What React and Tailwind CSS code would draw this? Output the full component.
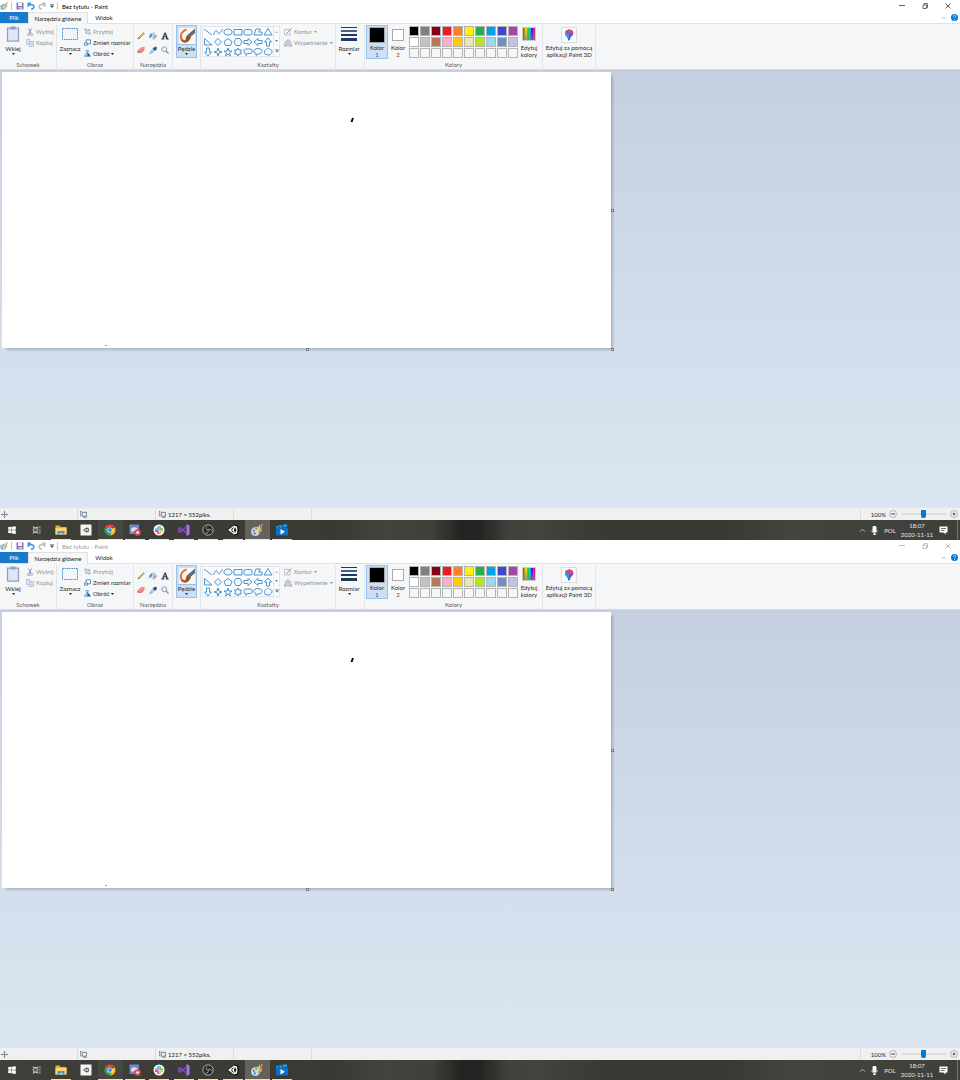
import React from "react";

const FONT = "font-['Lato','Open_Sans','Noto_Sans',sans-serif]";

function Svg({ className, box = "0 0 16 16", children }) {
  return (
    <svg viewBox={box} className={`block shrink-0 ${className}`} fill="none" aria-hidden="true">
      {children}
    </svg>
  );
}

/* ---------- icons ---------- */

function PaintIcon({ className = "size-2" }) {
  return (
    <Svg className={className}>
      <path d="M0 10c0-4 4-6 8-6 3 0 6 1 6 4s-3 2-3 4-2 4-5 4-6-2-6-6z" fill="#c4e0ee" stroke="#86b3cc" />
      <circle cx="3.6" cy="9" r="1.5" fill="#d94a38" />
      <circle cx="7" cy="6.4" r="1.4" fill="#4fa64a" />
      <circle cx="5" cy="12.500" r="1.5" fill="#2f7fcf" />
      <path d="M15 0L10 12" stroke="#e8912d" strokeWidth="1.900" />
      <path d="M11.500 1L9 12" stroke="#f3c65a" strokeWidth="1.400" />
    </Svg>
  );
}

function SaveIcon() {
  return (
    <Svg className="size-2">
      <path d="M1 1h14v14H1z" fill="#8474bc" />
      <path d="M4 1h8v7H4z" fill="#f2f0fa" />
      <path d="M4 10h8v5H4z" fill="#d8d4ec" />
      <path d="M5 11h2v3H5z" fill="#5a4b99" />
    </Svg>
  );
}

function UndoIcon({ flip, className }) {
  return (
    <Svg className={className}>
      <g transform={flip ? "translate(16 0) scale(-1 1)" : undefined}>
        <path d="M4 5.500h5c7 0 6 8-1 9" stroke="currentColor" strokeWidth="3" />
        <path d="M1 1l8 0-6 9H1z" fill="currentColor" />
      </g>
    </Svg>
  );
}

function Caret({ className = "" }) {
  return (
    <Svg className={`h-[2px] w-[3px] ${className}`} box="0 0 6 4">
      <path d="M0 0h6L3 4z" fill="currentColor" />
    </Svg>
  );
}

function PasteIcon() {
  return (
    <Svg className="h-4 w-3.5" box="0 0 28 32">
      <path d="M3 4h22v26H3z" fill="#dbe5f3" stroke="#8ea1c2" strokeWidth="2.500" />
      <path d="M9 1h10v6H9z" fill="#8ea1c2" />
      <path d="M6 9h16v18H6z" fill="#e0e8f5" />
    </Svg>
  );
}

function CutIcon() {
  return (
    <Svg className="size-2">
      <path d="M5 1l5 10M11 1L6 11" stroke="#8e9bb3" strokeWidth="2" />
      <circle cx="5" cy="13" r="2.2" stroke="#8e9bb3" strokeWidth="1.8" />
      <circle cx="11" cy="13" r="2.2" stroke="#8e9bb3" strokeWidth="1.8" />
    </Svg>
  );
}

function CopyIcon() {
  return (
    <Svg className="size-2">
      <path d="M1 1h7v10H1z" fill="#dfe7f3" stroke="#a3b4cf" strokeWidth="1.4" />
      <path d="M6 5h9v10H6z" fill="#dfe7f3" stroke="#a3b4cf" strokeWidth="1.4" />
      <path d="M8 8h5M8 11h5" stroke="#a3b4cf" />
    </Svg>
  );
}

function SelectIcon() {
  return (
    <Svg className="h-4 w-4" box="0 0 32 32">
      <path d="M1 5h30v22H1z" fill="#f0f5fb" stroke="#4a8fc8" strokeWidth="2" strokeDasharray="3 1.500" />
    </Svg>
  );
}

function CropIcon() {
  return (
    <Svg className="size-[7px]">
      <path d="M4 0v12h12M0 4h12v12M4 12L14 2" stroke="#8f9cb6" strokeWidth="1.6" />
    </Svg>
  );
}

function ResizeIcon() {
  return (
    <Svg className="size-[7px]">
      <path d="M5 2h10v9H5z" fill="#fff" stroke="#3d7fb4" strokeWidth="2" />
      <path d="M1 9h7v5H1z" fill="#fff" stroke="#3d7fb4" strokeWidth="2" />
    </Svg>
  );
}

function RotateIcon() {
  return (
    <Svg className="size-[7px]">
      <path d="M8 3v12H0z" fill="#9cc7e6" stroke="#3d8ec4" />
      <path d="M8 15V4l8 11z" fill="#1c5f9c" />
      <path d="M3 3c2-3 6-3 9 0" stroke="#2f6fb0" strokeWidth="1.6" />
    </Svg>
  );
}

const TOOLS = [
  {
    name: "Ołówek",
    art: (
      <>
        <path d="M2 14l2-4L13 1l2 2-9 9z" fill="#e9b54c" stroke="#a87935" />
        <path d="M2 14l1-3 2 2z" fill="#333" />
      </>
    ),
  },
  {
    name: "Wypełnianie kolorem",
    art: (
      <>
        <path d="M9 1l7 7-6 7-6-6z" fill="#dbe7f2" stroke="#7d9ab8" strokeWidth="1.3" />
        <path d="M8 5l6 3-4 6z" fill="#d9886b" />
        <path d="M7 2C2 3-1 8 1 13l4-4z" fill="#3f97d6" />
      </>
    ),
  },
  {
    name: "Tekst",
    art: (
      <path
        d="M7 1h2.500L14 13h1.500v2H9.500v-2h1l-.7-2.500H6L5.200 13h1.200v2H.8v-2H2zM8 4.600L6.500 8.600h2.800z"
        fill="#26405f"
      />
    ),
  },
  {
    name: "Gumka",
    art: (
      <>
        <path d="M1 10l7-7h7l-6 8H1z" fill="#f0938f" stroke="#d0716e" />
        <path d="M1 10h8l6-6v4l-6 6H1z" fill="#e07a77" />
      </>
    ),
  },
  {
    name: "Selektor kolorów",
    art: (
      <>
        <path d="M1 15l2-4 6-6 3 3-6 6z" fill="#a9d0ef" stroke="#5f90bd" />
        <path d="M7 4l3-1 3-2 3 2-1 4-3 3z" fill="#28568e" />
      </>
    ),
  },
  {
    name: "Lupa",
    art: (
      <>
        <circle cx="6.500" cy="6.500" r="5" fill="#e8f2fb" stroke="#8396ae" strokeWidth="1.8" />
        <path d="M10 10l5 5" stroke="#a88960" strokeWidth="2.6" />
      </>
    ),
  },
];

function BrushIcon() {
  return (
    <Svg className="size-4" box="0 0 32 32">
      <rect width="32" height="32" fill="#faf7f3" />
      <path d="M15 3C7 6 2 13 4 20c2 7 9 8 14 4" stroke="#e8703c" strokeWidth="4.500" />
      <path d="M5 23c3 6 10 6 14 1" stroke="#cf4a20" strokeWidth="3.500" />
      <path d="M32 1v9l-9 8-5-5z" fill="#5d6b7d" />
      <path d="M18 13l6 5c-1 5-5 9-12 10 2-3 0-10 6-15z" fill="#8a5634" />
    </Svg>
  );
}

const SHAPES = [
  ["Linia", "M2 4l16 12"],
  ["Krzywa", "M1 16c5-14 7-8 9-4s4 1 9-8"],
  ["Owal", "M10 4c11 0 11 12 0 12S-1 4 10 4z"],
  ["Prostokąt", "M2 5h16v11H2z"],
  ["Prostokąt zaokrąglony", "M5 5h10q3 0 3 3v5q0 3-3 3H5q-3 0-3-3V8q0-3 3-3z"],
  ["Wielokąt", "M6 4h9l-4 6h7v6H2z"],
  ["Trójkąt", "M10 3l8 13H2z"],
  ["Trójkąt prostokątny", "M3 3l15 13H3z"],
  ["Romb", "M10 3l7 7-7 7-7-7z"],
  ["Pięciokąt", "M10 3l8 6-3 8H5L2 9z"],
  ["Sześciokąt", "M6 3h8l4 7-4 7H6l-4-7z"],
  ["Strzałka w prawo", "M2 7h8V3l8 7-8 7v-4H2z"],
  ["Strzałka w lewo", "M18 7h-8V3l-8 7 8 7v-4h8z"],
  ["Strzałka w górę", "M7 18v-8H3l7-8 7 8h-4v8z"],
  ["Strzałka w dół", "M7 2v8H3l7 8 7-8h-4V2z"],
  ["Gwiazda 4-ramienna", "M10 2l2 6 6 2-6 2-2 6-2-6-6-2 6-2z"],
  ["Gwiazda 5-ramienna", "M10 2l2 6h6l-5 4 2 6-5-4-5 4 2-6-5-4h6z"],
  ["Gwiazda 6-ramienna", "M10 2l2 4h5l-2 4 2 4h-5l-2 4-2-4H3l2-4-2-4h5z"],
  ["Objaśnienie prostokątne", "M5 4h10q3 0 3 3v3q0 3-3 3H9l-3 4v-4H5q-3 0-3-3V7q0-3 3-3z"],
  ["Objaśnienie owalne", "M10 3c11 0 11 11 0 11l-4 3v-4C-2 11 1 3 10 3z"],
  ["Chmurka", "M6 5c3-4 8-2 8 0 5 0 5 6 2 8-1 4-6 4-8 2-5 1-7-3-4-5-2-2 0-5 2-5z"],
];

const COLORS = [
  ["Czarny", "bg-[#000000]"], ["Szary 50%", "bg-[#7f7f7f]"], ["Ciemnoczerwony", "bg-[#880015]"],
  ["Czerwony", "bg-[#ed1c24]"], ["Pomarańczowy", "bg-[#ff7f27]"], ["Żółty", "bg-[#fff200]"],
  ["Zielony", "bg-[#22b14c]"], ["Turkusowy", "bg-[#00a2e8]"], ["Indygo", "bg-[#3f48cc]"],
  ["Purpurowy", "bg-[#a349a4]"], ["Biały", "bg-[#ffffff]"], ["Szary 25%", "bg-[#c3c3c3]"],
  ["Brązowy", "bg-[#b97a57]"], ["Różany", "bg-[#ffaec9]"], ["Złoty", "bg-[#ffc90e]"],
  ["Jasnożółty", "bg-[#efe4b0]"], ["Limonkowy", "bg-[#b5e61d]"], ["Jasnoturkusowy", "bg-[#99d9ea]"],
  ["Niebieskoszary", "bg-[#7092be]"], ["Lawendowy", "bg-[#c8bfe7]"],
  ["Własny 1", "bg-[#f5f6f7]"], ["Własny 2", "bg-[#f5f6f7]"], ["Własny 3", "bg-[#f5f6f7]"],
  ["Własny 4", "bg-[#f5f6f7]"], ["Własny 5", "bg-[#f5f6f7]"], ["Własny 6", "bg-[#f5f6f7]"],
  ["Własny 7", "bg-[#f5f6f7]"], ["Własny 8", "bg-[#f5f6f7]"], ["Własny 9", "bg-[#f5f6f7]"],
  ["Własny 10", "bg-[#f5f6f7]"],
];

/* ---------- window chrome ---------- */

function TitleBar({ active }) {
  return (
    <header className="flex h-3 items-center bg-white">
      <PaintIcon />
      <span className="ml-[3px] h-2 w-px bg-[#c4c4c4]" />
      <button aria-label="Zapisz" className="ml-1"><SaveIcon /></button>
      <button aria-label="Cofnij" className="ml-[3px] text-[#3a96dd]"><UndoIcon className="size-2" /></button>
      <button aria-label="Ponów" className="ml-[3px] text-[#b3c0cd]"><UndoIcon flip className="size-2" /></button>
      <button aria-label="Dostosuj pasek" className="ml-1 text-[#444]">
        <Svg className="h-1 w-1" box="0 0 8 8"><path d="M0 1h8" stroke="#444" /><path d="M0 3h8L4 8z" fill="#444" /></Svg>
      </button>
      <span className="ml-[3px] h-2 w-px bg-[#c4c4c4]" />
      <h1 className={`ml-1 ${active ? "text-black" : "text-[#999]"}`}>Bez tytułu - Paint</h1>
      <div className={`ml-auto flex items-center ${active ? "text-[#333]" : "text-[#aaa]"}`}>
        <button aria-label="Minimalizuj" className="flex h-3 w-[23px] items-center justify-center">
          <Svg className="h-1.5 w-1.5" box="0 0 6 6"><path d="M0 2.500h6" stroke="currentColor" strokeWidth=".8" /></Svg>
        </button>
        <button aria-label="Przywróć" className="flex h-3 w-[23px] items-center justify-center">
          <Svg className="h-1.5 w-1.5" box="0 0 12 12"><path d="M2 4h7v7H2zM4 4V1h7v8H9" stroke="currentColor" strokeWidth="1.4" /></Svg>
        </button>
        <button aria-label="Zamknij" className="flex h-3 w-[23px] items-center justify-center">
          <Svg className="h-1.5 w-1.5" box="0 0 12 12"><path d="M1 1l10 10M11 1L1 11" stroke="currentColor" strokeWidth="1.6" /></Svg>
        </button>
        <span className="w-px" />
      </div>
    </header>
  );
}

function Tabs() {
  return (
    <nav className="flex h-3 border-b border-[#e0e1e3] bg-white text-[#222]">
      <button className="h-[11px] w-7 bg-[#1979ca] text-white">Plik</button>
      <button className="-mb-px h-3 w-15 border-x border-t border-[#e0e1e3] bg-[#f5f6f7]">Narzędzia główne</button>
      <button className="h-[11px] w-8">Widok</button>
      <div className="ml-auto flex items-center gap-[5px] pr-[2px]">
        <button aria-label="Zwiń wstążkę">
          <Svg className="h-1 w-[5px]" box="0 0 10 8"><path d="M1 6l4-4 4 4" stroke="#aaa" strokeWidth="1.6" /></Svg>
        </button>
        <button aria-label="Pomoc" className="flex size-[7px] items-center justify-center rounded-full bg-[#0078d7]">
          <Svg className="size-[7px]">
            <path d="M5.500 6c0-4 5.500-4 5.500-.5C11 8 8 7.500 8 10M8 11.500v2" stroke="#fff" strokeWidth="1.6" />
          </Svg>
        </button>
      </div>
    </nav>
  );
}

function Group({ label, className, children }) {
  return (
    <section className={`flex shrink-0 flex-col border-r border-[#e2e4e7] ${className}`}>
      <div className="flex h-9 items-start">{children}</div>
      {label && <h2 className="text-center text-[#5a5a5a]">{label}</h2>}
    </section>
  );
}

function SmallButton({ icon, caret, disabled, children }) {
  return (
    <button disabled={disabled} className={`flex h-[11px] items-center gap-[2px] whitespace-nowrap ${disabled ? "text-[#929292]" : ""}`}>
      {icon}
      {children}
      {caret && <Caret />}
    </button>
  );
}

function BigButton({ icon, caret, className = "", children }) {
  return (
    <button className={`flex shrink-0 flex-col items-center pt-px ${className}`}>
      <span className="flex h-[19px] items-start justify-center">{icon}</span>
      <span className="whitespace-nowrap">{children}</span>
      {caret && <Caret className="mt-px" />}
    </button>
  );
}

function Ribbon() {
  return (
    <div className="flex h-[46px] overflow-hidden border-b border-[#d3d9e2] bg-[#f5f6f7] pt-px text-[#2a2a2a]">
      <Group label="Schowek" className="w-[57px]">
        <BigButton icon={<PasteIcon />} caret className="w-[26px]">Wklej</BigButton>
        <div className="pt-px">
          <SmallButton icon={<CutIcon />} disabled>Wytnij</SmallButton>
          <SmallButton icon={<CopyIcon />} disabled>Kopiuj</SmallButton>
        </div>
      </Group>

      <Group label="Obraz" className="w-[77px]">
        <BigButton icon={<SelectIcon />} caret className="w-[26px]">Zaznacz</BigButton>
        <div className="pt-px pl-px">
          <SmallButton icon={<CropIcon />} disabled>Przytnij</SmallButton>
          <SmallButton icon={<ResizeIcon />}>Zmień rozmiar</SmallButton>
          <SmallButton icon={<RotateIcon />} caret>Obróć</SmallButton>
        </div>
      </Group>

      <Group label="Narzędzia" className="w-[39px]">
        <div className="grid grid-cols-3 gap-x-1 gap-y-[6px] pt-[7px] pl-[3px]">
          {TOOLS.map((t) => (
            <button key={t.name} aria-label={t.name}><Svg className="size-2">{t.art}</Svg></button>
          ))}
        </div>
      </Group>

      <Group className="w-7">
        <button className="ml-[3px] flex h-[33px] w-[21px] flex-col items-center border border-[#98c2ec] bg-[#c9e0f7] pt-[2px]">
          <BrushIcon />
          <span className="w-full border-t border-[#98c2ec]">Pędzle</span>
          <Caret className="mt-px" />
        </button>
      </Group>

      <Group label="Kształty" className="w-[135px]">
        <div className="mt-px ml-px flex h-[31px] border border-[#e2e5e9] bg-[#fbfcfd]">
          <div className="grid grid-cols-7 content-start">
            {SHAPES.map(([name, d]) => (
              <button key={name} aria-label={name}>
                <Svg className="size-[10px]" box="0 0 20 20">
                  <path d={d} stroke="#3b8ac4" strokeWidth="1.800" fill="#f3f9fe" />
                </Svg>
              </button>
            ))}
          </div>
          <div className="flex w-[6px] flex-col items-center justify-around border-l border-[#e2e5e9] text-[#777]">
            <button aria-label="Przewiń w górę" className="text-[#bbb]"><Caret className="rotate-180" /></button>
            <button aria-label="Przewiń w dół"><Caret /></button>
            <button aria-label="Więcej kształtów">
              <Svg className="h-1 w-1" box="0 0 8 8"><path d="M0 1h8" stroke="#666" /><path d="M0 3h8L4 7z" fill="#666" /></Svg>
            </button>
          </div>
        </div>
        <div className="pt-px pl-1">
          <SmallButton
            disabled
            caret
            icon={<Svg className="size-2"><path d="M1 3h11v11H1z" stroke="#a9b4c6" strokeWidth="1.500" /><path d="M4 12L15 1" stroke="#8f9db5" strokeWidth="2" /></Svg>}
          >
            Kontur
          </SmallButton>
          <SmallButton
            disabled
            caret
            icon={<Svg className="size-2"><path d="M8 1l6 6-6 6-6-6z" fill="#c4cedd" stroke="#8f9db5" strokeWidth="1.500" /><path d="M0 15V9l8 6zM8 15h8V9z" fill="#9facc2" /></Svg>}
          >
            Wypełnienie
          </SmallButton>
        </div>
      </Group>

      <Group className="w-[29px]">
        <BigButton
          caret
          className="w-[26px]"
          icon={<Svg className="h-4 w-4" box="0 0 16 16"><path d="M0 1.500h16" stroke="#1e3a63" /><path d="M0 5h16" stroke="#1e3a63" strokeWidth="1.600" /><path d="M0 9h16" stroke="#1e3a63" strokeWidth="2" /><path d="M0 13.500h16" stroke="#1e3a63" strokeWidth="3" /></Svg>}
        >
          Rozmiar
        </BigButton>
      </Group>

      <Group label="Kolory" className="w-[178px]">
        <button className="ml-px flex h-[34px] w-[22px] flex-col items-center border border-[#98c2ec] bg-[#c9e0f7] pt-px">
          <span className="size-4 border border-[#a8a8a8] bg-black" />
          <span className="mt-px">Kolor</span>
          <span className="text-[#555]">1</span>
        </button>
        <button className="flex h-[34px] w-5 flex-col items-center pt-1">
          <span className="size-3 border border-[#a8a8a8] bg-white" />
          <span className="mt-[3px]">Kolor</span>
          <span className="text-[#555]">2</span>
        </button>
        <div className="ml-px grid grid-cols-10 gap-px pt-px">
          {COLORS.map(([name, bg]) => (
            <button key={name} aria-label={name} className={`size-[10px] border border-[#b4b4b4] ${bg}`} />
          ))}
        </div>
        <button className="flex w-[22px] flex-col items-center pt-[2px]">
          <span className="mb-[3px] size-[14px] border border-[#ccc] bg-[linear-gradient(to_bottom,rgba(128,128,128,0),rgba(128,128,128,.7)),linear-gradient(to_right,#f00,#ff0_25%,#0d0_42%,#0df_58%,#00f_75%,#f0f_88%,#f02)]" />
          <span>Edytuj</span>
          <span>kolory</span>
        </button>
      </Group>

      <Group className="w-[53px]">
        <button className="flex w-full flex-col items-center pt-[2px]">
          <span className="mb-px border border-[#ddd] bg-[#fafafa] p-px">
            <Svg className="size-3" box="0 0 24 24">
              <path d="M12 1C5 1 2 7 5 12l7 3z" fill="#23b4e8" />
              <path d="M12 1c8 0 11 6 7 12l-7 2L5 5z" fill="#7b4bd6" />
              <path d="M12 1c5 0 8 3 8 7l-8 2L6 4z" fill="#ee3e6d" />
              <path d="M5 12h14c-2 4-5 5-5 9 0 3-4 3-4 0 0-4-3-5-5-9z" fill="#3868d8" />
              <path d="M5 7l7 3v9C9 15 3 14 5 7z" fill="#1fa0e0" />
            </Svg>
          </span>
          <span className="whitespace-nowrap">Edytuj za pomocą</span>
          <span className="whitespace-nowrap">aplikacji Paint 3D</span>
        </button>
      </Group>
    </div>
  );
}

function Workspace() {
  const handle = "absolute size-[3px] border border-[#777] bg-white";
  return (
    <main className="flex-1 bg-linear-to-b from-[#c5cfe0] to-[#dce6f2] pt-[2px] pl-[2px]">
      <div className="relative w-[609px] bg-white shadow-[3px_3px_2px_-1px_rgba(70,95,135,0.3)]">
        <svg viewBox="0 0 609 276" className="block w-full" role="img" aria-label="Obszar rysowania">
          <path d="M351 46l-1.500 4" stroke="#000" strokeWidth="2" />
          <path d="M103 273.500h2" stroke="#888" strokeWidth=".8" />
        </svg>
        <span className={`${handle} top-1/2 left-full -translate-y-px`} />
        <span className={`${handle} top-full left-1/2 -translate-x-px`} />
        <span className={`${handle} top-full left-full`} />
      </div>
    </main>
  );
}

function SizeIcon() {
  return (
    <Svg className="size-[7px]">
      <path d="M5 3h10v9H5z" stroke="#4a617f" strokeWidth="1.800" />
      <path d="M1 1v11M0 1h3M8 15h8" stroke="#4a617f" strokeWidth="1.800" strokeDasharray="3 1" />
    </Svg>
  );
}

function ZoomButton({ label, plus }) {
  return (
    <button aria-label={label}>
      <Svg className="size-2">
        <circle cx="8" cy="8" r="6.800" fill="#fafafa" stroke="#888" strokeWidth="1.300" />
        <path d={plus ? "M5 8h6M8 5v6" : "M4 8h8"} stroke="#555" strokeWidth="2.400" />
      </Svg>
    </button>
  );
}

function StatusBar() {
  const cell = "flex items-center border-r border-[#dcdcdc]";
  return (
    <footer className="flex h-3 bg-[#f0f0f0] text-[#222]">
      <div className={`${cell} w-[78px] pl-px`}>
        <Svg className="size-[7px]"><path d="M8 1v14M1 8h14M6 3l2-2 2 2M6 13l2 2 2-2M3 6L1 8l2 2M13 6l2 2-2 2" stroke="#4a617f" strokeWidth="1.500" /></Svg>
      </div>
      <div className={`${cell} w-[78px] pl-[2px]`}><SizeIcon /></div>
      <div className={`${cell} w-[78px] gap-[2px] pl-[3px] whitespace-nowrap`}><SizeIcon />1217 × 552piks.</div>
      <div className={`${cell} w-[78px]`} />
      <div className="ml-auto flex items-center border-l border-[#dcdcdc] pr-[2px]">
        <span className="w-7 pr-[3px] text-right">100%</span>
        <ZoomButton label="Pomniejsz" />
        <input
          type="range"
          aria-label="Powiększenie"
          defaultValue="50"
          className="mx-1 h-2 w-[45px] appearance-none bg-transparent [&::-webkit-slider-runnable-track]:h-[2px] [&::-webkit-slider-runnable-track]:bg-[#dcdcdc] [&::-webkit-slider-thumb]:-mt-[3px] [&::-webkit-slider-thumb]:h-2 [&::-webkit-slider-thumb]:w-[5px] [&::-webkit-slider-thumb]:appearance-none [&::-webkit-slider-thumb]:rounded-b-[2px] [&::-webkit-slider-thumb]:bg-[#0078d7]"
        />
        <ZoomButton label="Powiększ" plus />
      </div>
    </footer>
  );
}

/* ---------- taskbar ---------- */

const APPS = [
  { name: "Start", art: <path d="M3 5l8-1v7.500H3zM12 3.900L21 2.700v8.800h-9zM3 12.500h8V20l-8-1zM12 12.500h9v8.800l-9-1.200z" fill="#fff" /> },
  { name: "Widok zadań", art: <path d="M3 3v3h11V3M3 21v-3h11v3M3 9h11v6H3zM19 3v5M19 10v3M19 15v6" stroke="#ddd" strokeWidth="1.800" /> },
  {
    name: "Eksplorator plików",
    open: true,
    art: (
      <>
        <path d="M1 3h8l2 3h12v15H1z" fill="#e9ad2f" />
        <path d="M1 8h22v13H1z" fill="#fbd768" />
        <path d="M5 21v-7h14v7h-4v-3H9v3z" fill="#4597d8" />
      </>
    ),
  },
  {
    name: "Unity Hub",
    art: (
      <>
        <path d="M1 1h22v22H1z" fill="#f4f4f4" />
        <path d="M6 12l7-5 4 1 1 4-1 4-4 1z" fill="#555" />
        <path d="M9 12l4-2.500v5zM14 9l2 3-2 3" fill="#f4f4f4" />
      </>
    ),
  },
  {
    name: "Google Chrome",
    open: true,
    tint: "bg-white/5",
    art: (
      <>
        <path d="M12 12L2.500 6.500A11 11 0 0 1 21.500 6.500H12z" fill="#e8453c" />
        <path d="M12 12l9.500-5.500A11 11 0 0 1 12 23l3-8z" fill="#fbc116" />
        <path d="M12 12l3 5-3 6A11 11 0 0 1 2.500 6.500z" fill="#34a353" />
        <circle cx="12" cy="12" r="5.200" fill="#fff" />
        <circle cx="12" cy="12" r="4" fill="#4486f4" />
      </>
    ),
  },
  {
    name: "Discord",
    open: true,
    art: (
      <>
        <path d="M1 1h19v19H1z" fill="#7388c9" />
        <path d="M5 8c4-2 7-2 11 0l1 6c-2 2-4 2-4 2l-1-2H9l-1 2s-2 0-4-2z" fill="#d7dff3" />
        <circle cx="17" cy="17" r="6.500" fill="#e6484b" />
        <circle cx="17" cy="17" r="2.500" fill="#fff" />
      </>
    ),
  },
  {
    name: "Slack",
    open: true,
    art: (
      <>
        <circle cx="12" cy="12" r="11" fill="#fff" />
        <path d="M10 5v6M5 10h3" stroke="#36c5f0" strokeWidth="3" strokeLinecap="round" />
        <path d="M13.500 10h5M14 5v2" stroke="#2eb67d" strokeWidth="3" strokeLinecap="round" />
        <path d="M14 14v5M17 14h2" stroke="#ecb22e" strokeWidth="3" strokeLinecap="round" />
        <path d="M5 14h5M10 17v2" stroke="#e01e5a" strokeWidth="3" strokeLinecap="round" />
      </>
    ),
  },
  {
    name: "Visual Studio",
    open: true,
    art: (
      <>
        <path d="M17 0l6 3v18l-6 3z" fill="#a779e0" />
        <path d="M3 7l15 12M3 17L18 5M2 7v10" stroke="#8a4bd0" strokeWidth="3" />
      </>
    ),
  },
  {
    name: "OBS Studio",
    open: true,
    art: (
      <>
        <circle cx="12" cy="12" r="10.300" fill="#26262b" stroke="#c9c9c9" strokeWidth="1.600" />
        <path d="M12 12c-4 0-5-4-2-7M12 12c2-3 6-2 7 2M12 12c2 4-1 7-5 6" stroke="#a9a9a9" strokeWidth="1.800" />
      </>
    ),
  },
  {
    name: "Unity",
    open: true,
    art: (
      <>
        <path d="M0 12L15 1l7 2 2 9-2 9-7 2z" fill="#0b0b0b" />
        <path d="M2 12L14 3l6 2 1 7-1 7-6 2z" fill="#fff" />
        <path d="M7 11l7-5-3 5zM7 13l7 5-3-5zM16 6l3 6-3 6-2-6z" fill="#0b0b0b" />
      </>
    ),
  },
  { name: "Paint", open: true, tint: "bg-white/20", paint: true },
  {
    name: "Filmy i TV",
    open: true,
    art: (
      <>
        <path d="M0 4l21-4 2 6L1 9z" fill="#1a9be6" />
        <path d="M0 8h24v15H0z" fill="#0f6fc8" />
        <path d="M4 2l3 6M11 1l3 7" stroke="#0d4f91" strokeWidth="2" />
        <path d="M9 10l9 5.500L9 21z" fill="#fff" />
      </>
    ),
  },
];

function Taskbar() {
  return (
    <div className="flex h-5 bg-[linear-gradient(to_right,#3f403a,#3a3933_35%,#42443e_40%,#3f403a_45%,#242321_48%,#242321_50%,#40423c_53%,#42443e_56%,#3a3933_63%,#3a3933_76%,#42443e_82%,#3f403a)] text-[#e8e8e8]">
      <div className="grid w-[294px] grid-cols-12">
        {APPS.map((a) => (
          <button key={a.name} aria-label={a.name} className={`flex flex-col items-center ${a.tint || ""}`}>
            <span className="flex flex-1 items-center">
              {a.paint ? <PaintIcon className="size-3" /> : <Svg className={a.name === "Start" || a.name === "Widok zadań" ? "size-[10px]" : "size-3"} box="0 0 24 24">{a.art}</Svg>}
            </span>
            <span className={`h-px ${a.tint ? "w-full" : "w-5"} ${a.open ? "bg-[#f7e0b4]" : ""}`} />
          </button>
        ))}
      </div>
      <div className="ml-auto flex items-center">
        <button aria-label="Ukryte ikony">
          <Svg className="size-[7px]"><path d="M2 11l6-6 6 6" stroke="#ddd" strokeWidth="1.600" /></Svg>
        </button>
        <button aria-label="Mikrofon" className="ml-1">
          <Svg className="size-[9px]"><rect x="4.500" y="0" width="7" height="11" rx="2.500" fill="#fff" /><path d="M3.500 8c0 6 9 6 9 0M8 12v3.500M5.500 15h5" stroke="#fff" strokeWidth="1.600" /></Svg>
        </button>
        <button className="ml-[5px] w-3">POL</button>
        <button className="ml-[5px] flex w-8 flex-col items-center leading-[9px] whitespace-nowrap">
          <span>18:07</span>
          <span>2020-11-11</span>
        </button>
        <button aria-label="Powiadomienia" className="ml-[6px]">
          <Svg className="size-[9px]" box="0 0 18 18"><path d="M1 1h16v12h-4v4l-4-4H1z" fill="#fff" /><path d="M4 5h10M4 9h7" stroke="#3f403a" strokeWidth="1.500" /></Svg>
        </button>
        <span className="mr-[2px] ml-[9px] h-5 w-px bg-[#777]" />
      </div>
    </div>
  );
}

function Desktop({ active }) {
  return (
    <div className="flex min-h-[540px] flex-1 flex-col">
      <TitleBar active={active} />
      <Tabs />
      <Ribbon />
      <Workspace />
      <StatusBar />
      <Taskbar />
    </div>
  );
}

export default function App() {
  return (
    <div className={`flex min-h-screen flex-col overflow-hidden text-[6px] leading-[7px] text-[#333] ${FONT}`}>
      <Desktop active />
      <Desktop active={false} />
    </div>
  );
}
